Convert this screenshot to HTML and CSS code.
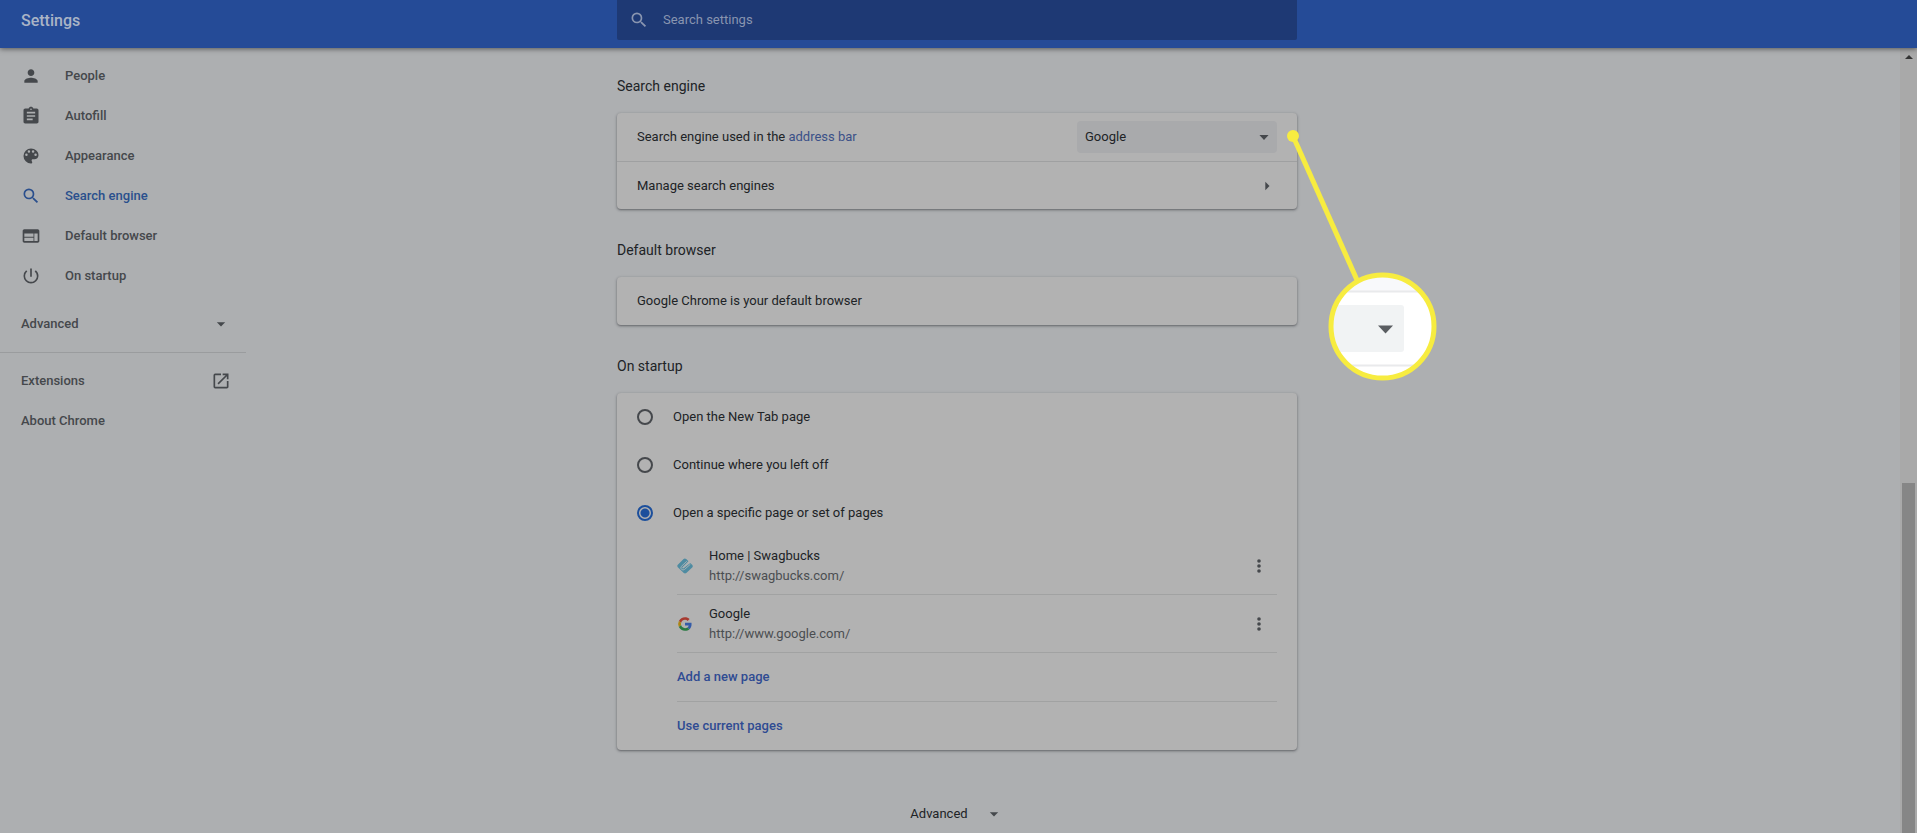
FILE: index.html
```html
<!DOCTYPE html>
<html lang="en">
<head>
<meta charset="utf-8">
<title>Settings</title>
<link rel="stylesheet" href="styles.css">
</head>
<body>
<header class="topbar">
  <h1 class="topbar-title">Settings</h1>
  <label class="search">
    <svg class="icon" viewBox="0 0 24 24" aria-hidden="true"><path d="M15.5 14h-.79l-.28-.27A6.47 6.47 0 0 0 16 9.5 6.5 6.5 0 1 0 9.5 16c1.61 0 3.09-.59 4.23-1.57l.27.28v.79l5 4.99L20.49 19l-4.99-5zm-6 0C7.01 14 5 11.99 5 9.5S7.01 5 9.5 5 14 7.01 14 9.5 11.99 14 9.5 14z"/></svg>
    <input class="search-input" type="text" placeholder="Search settings" aria-label="Search settings">
  </label>
</header>
<div class="body">
  <div class="columns">
    <nav class="sidebar">
      <a class="nav-item" href="#people"><svg class="icon" viewBox="0 0 24 24"><path d="M12 12c2.21 0 4-1.79 4-4s-1.79-4-4-4-4 1.79-4 4 1.79 4 4 4zm0 2c-2.67 0-8 1.34-8 4v2h16v-2c0-2.66-5.33-4-8-4z"/></svg>People</a>
      <a class="nav-item" href="#autofill"><svg class="icon" viewBox="0 0 24 24"><path d="M19 3h-4.18C14.4 1.84 13.3 1 12 1s-2.4.84-2.82 2H5c-1.1 0-2 .9-2 2v14c0 1.1.9 2 2 2h14c1.1 0 2-.9 2-2V5c0-1.100-.9-2-2-2zm-7 0c.55 0 1 .45 1 1s-.45 1-1 1-1-.45-1-1 .45-1 1-1zm2 14H7v-2h7v2zm3-4H7v-2h10v2zm0-4H7V7h10v2z"/></svg>Autofill</a>
      <a class="nav-item" href="#appearance"><svg class="icon" viewBox="0 0 24 24"><path d="M12 3a9 9 0 0 0 0 18c.83 0 1.500-.67 1.500-1.500 0-.39-.15-.74-.39-1.010-.23-.26-.38-.61-.38-.99 0-.83.67-1.500 1.500-1.500H16c2.760 0 5-2.240 5-5 0-4.420-4.030-8-9-8zm-5.500 9a1.500 1.500 0 1 1 0-3 1.500 1.500 0 0 1 0 3zm3-4a1.500 1.500 0 1 1 0-3 1.500 1.500 0 0 1 0 3zm5 0a1.500 1.500 0 1 1 0-3 1.500 1.500 0 0 1 0 3zm3 4a1.500 1.500 0 1 1 0-3 1.500 1.500 0 0 1 0 3z"/></svg>Appearance</a>
      <a class="nav-item nav-item-active" href="#search"><svg class="icon" viewBox="0 0 24 24"><path d="M15.5 14h-.79l-.28-.27A6.47 6.47 0 0 0 16 9.5 6.5 6.5 0 1 0 9.5 16c1.61 0 3.09-.59 4.23-1.57l.27.28v.79l5 4.99L20.49 19l-4.99-5zm-6 0C7.01 14 5 11.99 5 9.5S7.01 5 9.5 5 14 7.01 14 9.5 11.99 14 9.5 14z"/></svg>Search engine</a>
      <a class="nav-item" href="#browser"><svg class="icon" viewBox="0 0 24 24"><path d="M20 4H4c-1.100 0-1.990.9-1.990 2L2 18c0 1.100.9 2 2 2h16c1.100 0 2-.9 2-2V6c0-1.100-.9-2-2-2zm-5 14H4v-4h11v4zm0-5H4V9h11v4zm5 5h-4V9h4v9z"/></svg>Default browser</a>
      <a class="nav-item" href="#startup"><svg class="icon" viewBox="0 0 24 24"><path d="M13 3h-2v10h2V3zm4.830 2.170-1.420 1.420A6.920 6.920 0 0 1 19 12a7 7 0 1 1-11.420-5.420L6.170 5.170A8.930 8.930 0 0 0 3 12a9 9 0 0 0 18 0c0-2.740-1.230-5.180-3.170-6.830z"/></svg>On startup</a>
      <button class="nav-item nav-wide nav-advanced" type="button">Advanced<svg class="icon" viewBox="0 0 24 24"><path d="M7 10l5 5 5-5z"/></svg></button>
      <hr class="nav-rule">
      <a class="nav-item nav-wide" href="#extensions">Extensions<svg class="icon" viewBox="0 0 24 24"><path d="M19 19H5V5h7V3H5a2 2 0 0 0-2 2v14a2 2 0 0 0 2 2h14c1.100 0 2-.9 2-2v-7h-2v7zM14 3v2h3.590l-9.830 9.830 1.410 1.410L19 6.410V10h2V3h-7z"/></svg></a>
      <a class="nav-item nav-wide" href="#about">About Chrome</a>
    </nav>
    <main class="main">
      <section class="section">
        <h2 class="section-title">Search engine</h2>
        <div class="card">
          <div class="row">
            <label for="engine">Search engine used in the <a class="link" href="#address">address bar</a></label>
            <div class="select-wrap">
              <select class="select" id="engine"><option>Google</option></select>
              <svg class="icon select-arrow" viewBox="0 0 24 24" aria-hidden="true"><path d="M6.500 9.500h11L12 15.500z"/></svg>
            </div>
          </div>
          <a class="row row-ruled" href="#manage">Manage search engines<svg class="icon" viewBox="0 0 24 24"><path d="M10 7l5 5-5 5z"/></svg></a>
          <svg class="callout" viewBox="0 0 160 260" aria-hidden="true">
            <defs><clipPath id="lens"><circle cx="95.500" cy="196.500" r="51"/></clipPath></defs>
            <path class="callout-line" d="M6 6 70 150"/>
            <circle class="callout-dot" cx="6" cy="6" r="6"/>
            <g clip-path="url(#lens)">
              <rect class="lens-page" x="40" y="140" width="112" height="112"/>
              <rect class="lens-card" x="40" y="162" width="112" height="90"/>
              <path class="lens-rule" d="M40 161.500H152M40 235.500H152"/>
              <rect class="lens-select" x="30" y="175" width="87" height="47" rx="3"/>
              <path class="lens-arrow" d="M91 195.500h15l-7.500 8z"/>
            </g>
            <circle class="callout-ring" cx="95.500" cy="196.500" r="51.500"/>
          </svg>
        </div>
      </section>
      <section class="section">
        <h2 class="section-title">Default browser</h2>
        <div class="card"><div class="row">Google Chrome is your default browser</div></div>
      </section>
      <section class="section">
        <h2 class="section-title">On startup</h2>
        <div class="card">
          <label class="choice"><input class="radio" type="radio" name="startup">Open the New Tab page</label>
          <label class="choice"><input class="radio" type="radio" name="startup">Continue where you left off</label>
          <label class="choice"><input class="radio" type="radio" name="startup" checked>Open a specific page or set of pages</label>
          <ul class="pages">
            <li class="page">
              <svg class="favicon" viewBox="0 0 16 16" aria-hidden="true"><path class="sb-shape" d="M6.600.9Q8 0 9.200 1.100L11.400 3.300 5.400 9.200Q5 10.400 6.300 10.500L13.300 4.900 15.300 7Q16.300 8.200 15.200 9.400L9.300 15.100Q8 16 6.800 15.100L.8 9.200Q-.2 8 .8 6.800z"/><path class="sb-lines" d="M9.800 3.200 4.200 8.600Q3.200 10.200 4.600 11.400 6 12.600 7.600 11.400L13.400 6.200M6.400 9.600 11 5.400"/></svg>
              <div class="page-text"><span>Home | Swagbucks</span><span class="page-url">http://swagbucks.com/</span></div>
              <button class="more" type="button" aria-label="More actions for Swagbucks"><svg class="icon" viewBox="0 0 20 20"><circle cx="10" cy="5" r="1.800"/><circle cx="10" cy="10" r="1.800"/><circle cx="10" cy="15" r="1.800"/></svg></button>
            </li>
            <li class="page">
              <svg class="favicon" viewBox="-4 -4 56 56" aria-hidden="true"><path fill="#a73a30" d="M24 9.500c3.540 0 6.710 1.220 9.210 3.600l6.850-6.850C35.900 2.380 30.470 0 24 0 14.620 0 6.510 5.380 2.560 13.220l7.980 6.190C12.430 13.720 17.740 9.500 24 9.500z"/><path fill="#345ba8" d="M46.980 24.550c0-1.570-.15-3.090-.38-4.550H24v9.020h12.940c-.58 2.960-2.260 5.480-4.780 7.180l7.730 6c4.510-4.180 7.090-10.360 7.090-17.650z"/><path fill="#ad8412" d="M10.530 28.590a14.500 14.500 0 0 1 0-9.180l-7.980-6.190a24 24 0 0 0 0 21.560z"/><path fill="#287a42" d="M24 48c6.480 0 11.930-2.130 15.890-5.810l-7.730-6c-2.150 1.450-4.920 2.300-8.160 2.300-6.260 0-11.570-4.220-13.470-9.910l-7.980 6.190C6.510 42.620 14.620 48 24 48z"/></svg>
              <div class="page-text"><span>Google</span><span class="page-url">http://www.google.com/</span></div>
              <button class="more" type="button" aria-label="More actions for Google"><svg class="icon" viewBox="0 0 20 20"><circle cx="10" cy="5" r="1.800"/><circle cx="10" cy="10" r="1.800"/><circle cx="10" cy="15" r="1.800"/></svg></button>
            </li>
            <li class="page page-action"><button class="text-button" type="button">Add a new page</button></li>
            <li class="page page-action"><button class="text-button" type="button">Use current pages</button></li>
          </ul>
        </div>
      </section>
      <button class="advanced" type="button">Advanced<svg class="icon" viewBox="0 0 24 24"><path d="M7 10l5 5 5-5z"/></svg></button>
    </main>
  </div>
  <div class="scrollbar" aria-hidden="true">
    <svg class="scroll-up" viewBox="0 0 8 4"><path d="M0 4 4 0 8 4z"/></svg>
    <div class="scroll-thumb"></div>
  </div>
</div>
</body>
</html>
```
FILE: styles.css
```css
* { box-sizing: border-box; }

body {
  margin: 0;
  height: 100vh;
  display: flex;
  flex-direction: column;
  overflow: hidden;
  background: #adafb1;
  color: #202326;
  font: 13px/20px Roboto, "Liberation Sans", sans-serif;
}

button, input, select { font: inherit; color: inherit; }
button { border: 0; padding: 0; background: none; text-align: left; }
a { color: inherit; text-decoration: none; }
ul { list-style: none; margin: 0; padding: 0; }

.icon {
  display: block;
  flex: none;
  width: 20px;
  height: 20px;
  fill: #45484c;
}

/* Top bar */
.topbar,
.columns {
  display: grid;
  grid-template-columns: 1fr minmax(0, 680px) 1fr;
  padding-right: 3px;
}
.topbar {
  flex: none;
  position: relative;
  z-index: 1;
  height: 48px;
  align-items: start;
  background: #254b97;
  box-shadow: 0 1px 5px rgba(0, 0, 0, .5);
}
.topbar-title {
  margin: 0;
  padding-left: 21px;
  color: #aab4c6;
  font-size: 16px;
  font-weight: 500;
  line-height: 42px;
}
.search {
  display: flex;
  align-items: center;
  gap: 14px;
  height: 40px;
  padding: 0 12px;
  border-radius: 0 0 2px 2px;
  background: #1e3974;
}
.search .icon { fill: #8995b0; }
.search-input {
  flex: 1;
  min-width: 0;
  border: 0;
  padding: 0;
  outline: 0;
  background: none;
}
.search-input::placeholder { color: #8995b0; opacity: 1; }

/* Page frame */
.body { flex: 1; min-height: 0; display: flex; }
.columns { flex: 1; padding-right: 0; margin-right: -14px; }

/* Navigation */
.sidebar { width: 246px; padding-top: 8px; color: #45484c; font-weight: 500; }
.nav-item {
  display: flex;
  align-items: center;
  gap: 24px;
  width: 100%;
  height: 40px;
  padding: 0 15px 0 21px;
}
.nav-item-active { color: #2a4f8d; }
.nav-item-active .icon { fill: #2a4f8d; }
.nav-wide { justify-content: space-between; }
.nav-advanced { margin-top: 8px; }
.nav-rule {
  margin: 8px 0;
  border: 0;
  border-top: 1px solid #9a9c9e;
}

/* Settings sections */
.section-title {
  margin: 0;
  padding: 28px 0 17px;
  font-size: 14px;
  font-weight: 400;
  line-height: 20px;
}
.section + .section .section-title { padding-top: 31px; }
.card {
  position: relative;
  border-radius: 4px;
  background: #b2b2b2;
  box-shadow: 0 1px 2px rgba(40, 43, 46, .45), 0 1px 3px 1px rgba(40, 43, 46, .12);
}
.row {
  display: flex;
  align-items: center;
  justify-content: space-between;
  height: 48px;
  padding: 0 20px;
}
.row-ruled { border-top: 1px solid #9fa0a1; }
.link { color: #3a5088; }
.select-wrap { position: relative; width: 200px; }
.select {
  display: block;
  width: 100%;
  height: 32px;
  padding: 0 8px;
  border: 0;
  border-radius: 4px;
  appearance: none;
  background: #a9aaac;
}
.select-arrow { position: absolute; top: 6px; right: 3px; pointer-events: none; }

/* Startup options */
.choice {
  display: flex;
  align-items: center;
  gap: 20px;
  height: 48px;
  padding: 0 20px;
}
.radio {
  flex: none;
  width: 16px;
  height: 16px;
  margin: 0;
  border: 2px solid #45484c;
  border-radius: 50%;
  appearance: none;
}
.radio:checked {
  border-color: #1c4f9c;
  background: radial-gradient(circle, #1c4f9c 4px, transparent 5px);
}
.pages { padding: 0 20px 0 60px; }
.page { display: flex; align-items: center; height: 57px; }
.page + .page { height: 58px; border-top: 1px solid #a1a2a2; }
.page + .page-action { height: 49px; }
.favicon { flex: none; width: 16px; height: 16px; margin-right: 16px; }
.sb-shape { fill: #4e8ba1; }
.sb-lines { fill: none; stroke: #a3b0b5; stroke-width: 1; }
.page-text { flex: 1; display: flex; flex-direction: column; }
.page-url { color: #4b4e51; }
.more { padding: 8px; }
.text-button { color: #2f4b92; font-weight: 500; }

.advanced {
  display: flex;
  align-items: center;
  gap: 16px;
  height: 40px;
  margin: 44px auto 0;
}

/* Magnified view of the select arrow */
.callout {
  position: absolute;
  z-index: 2;
  top: 17px;
  left: calc(100% - 10px);
  width: 160px;
  height: 260px;
  pointer-events: none;
}
.callout-line { stroke: #f7ec40; stroke-width: 5; }
.callout-dot { fill: #f7ec40; }
.callout-ring { fill: none; stroke: #f7ec40; stroke-width: 5; }
.lens-page { fill: #f8f9fb; }
.lens-card { fill: #ffffff; }
.lens-rule { stroke: #e9eaec; stroke-width: 2; }
.lens-select { fill: #f1f3f4; }
.lens-arrow { fill: #5a5d61; }

/* Scrollbar */
.scrollbar {
  flex: none;
  display: flex;
  flex-direction: column;
  align-items: center;
  width: 17px;
  padding-top: 7px;
  background: #a9a9a9;
}
.scroll-up { width: 8px; height: 4px; fill: #343434; }
.scroll-thumb { width: 13px; height: 45%; margin-top: auto; background: #868686; }
```
